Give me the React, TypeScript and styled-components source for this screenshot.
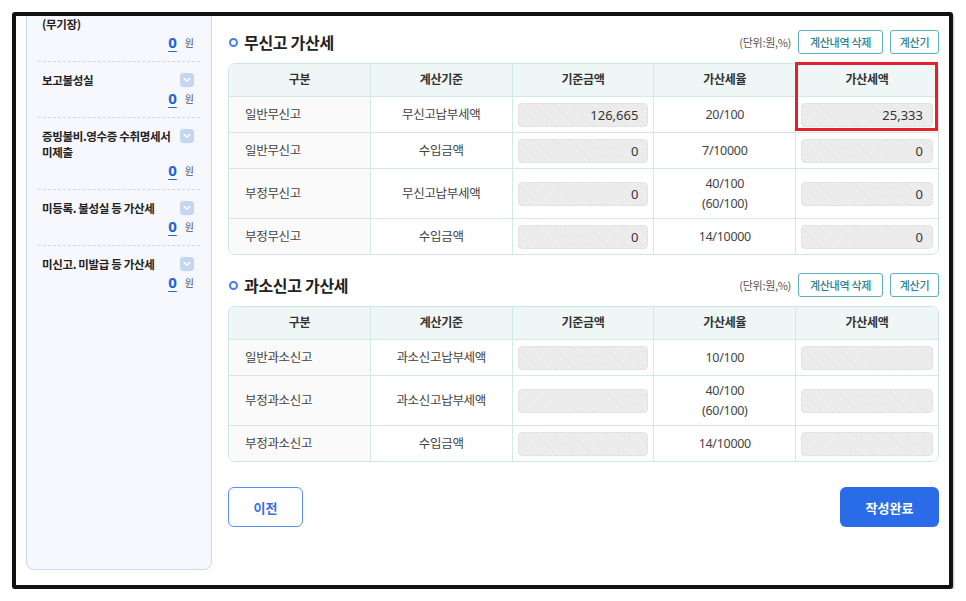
import React from "react";
import styled, { createGlobalStyle } from "styled-components";

const GlobalStyle = createGlobalStyle`
  html, body { margin: 0; padding: 0; background: #ffffff; }
  body {
    font-family: "Noto Sans", "Noto Sans CJK KR", sans-serif;
    color: #333;
    -webkit-font-smoothing: antialiased;
  }
  * { box-sizing: border-box; }
`;

const Frame = styled.div`
  margin: 12px 0 0 12px;
  width: 941px;
  height: 577px;
  border: 4px solid #111;
  border-radius: 3px;
  box-shadow: 1px 2px 2px rgba(0, 0, 0, 0.25);
  background: #fff;
  display: flex;
  padding: 0 10px 15px 10px;
  overflow: hidden;
`;

/* ---------- sidebar ---------- */

const Sidebar = styled.aside`
  width: 186px;
  flex-shrink: 0;
  background: #f6f8fe;
  border: 1px solid #c9daf5;
  border-top: none;
  border-radius: 0 0 8px 8px;
  padding: 0 11px;
`;

const SideItem = styled.div<{ $first?: boolean }>`
  padding: ${(p) => (p.$first ? "0" : "10px")} 6px 9px 4px;
  border-bottom: 1px dashed #cdd8ea;
  &:last-child { border-bottom: none; }
`;

const SideHead = styled.div`
  display: flex;
  align-items: flex-start;
  justify-content: space-between;
  gap: 4px;
`;

const SideTitle = styled.div`
  font-family: "Noto Sans CJK KR", sans-serif;
  font-size: 11.5px;
  font-weight: 700;
  line-height: 16px;
  color: #222;
  letter-spacing: -0.35px;
  white-space: nowrap;
`;

const Toggle = styled.span`
  width: 14px;
  height: 14px;
  margin-top: 1px;
  flex-shrink: 0;
  border-radius: 3px;
  background: #c5d6f2;
  display: flex;
  align-items: center;
  justify-content: center;
`;

const SideValue = styled.div`
  height: 20px;
  display: flex;
  align-items: center;
  justify-content: flex-end;
  gap: 8px;
`;

const Amount = styled.span`
  font-family: "Noto Sans", sans-serif;
  font-size: 15px;
  font-weight: 700;
  color: #2563d9;
  text-decoration: underline;
  text-underline-offset: 3px;
  text-decoration-thickness: 1px;
`;

const Won = styled.span`
  font-family: "Noto Sans CJK KR", sans-serif;
  font-size: 10px;
  color: #4b5671;
`;

const Chevron = () => (
  <svg width="8" height="6" viewBox="0 0 8 6">
    <polyline points="1.2,1.5 4,4.3 6.8,1.5" fill="none" stroke="#ffffff" strokeWidth="1.5" strokeLinecap="round" strokeLinejoin="round" />
  </svg>
);

/* ---------- main ---------- */

const Main = styled.main`
  flex: 1;
  margin-left: 16px;
  padding-top: 14px;
  display: flex;
  flex-direction: column;
`;

const SectionHead = styled.div<{ $gap?: number }>`
  height: 24px;
  margin-top: ${(p) => p.$gap ?? 0}px;
  margin-bottom: 9px;
  display: flex;
  align-items: center;
`;

const Dot = styled.span`
  width: 9px;
  height: 9px;
  border-radius: 50%;
  border: 2.2px solid #4a7de6;
  margin: 0 6px 0 1px;
`;

const SectionTitle = styled.h2`
  margin: 0;
  flex: 1;
  font-family: "Noto Sans CJK KR", sans-serif;
  font-size: 16px;
  font-weight: 700;
  color: #222;
  letter-spacing: -0.3px;
`;

const Unit = styled.span`
  font-family: "Noto Sans CJK KR", sans-serif;
  font-size: 11px;
  color: #555;
  margin-right: 7px;
  letter-spacing: -0.3px;
`;

const OutlineButton = styled.button<{ $w: number }>`
  width: ${(p) => p.$w}px;
  height: 24px;
  margin-left: ${(p) => (p.$w > 60 ? 0 : 7)}px;
  border: 1.5px solid #5eb1b8;
  border-radius: 3px;
  background: #fff;
  color: #2e818a;
  font-family: "Noto Sans CJK KR", sans-serif;
  font-size: 11px;
  font-weight: 500;
  letter-spacing: -0.3px;
  padding: 0;
`;

const TableWrap = styled.div`
  position: relative;
`;

const Grid = styled.div<{ $rows: string }>`
  display: grid;
  grid-template-columns: repeat(5, 1fr);
  grid-template-rows: ${(p) => p.$rows};
  border: 1px solid #cfe5e8;
  border-radius: 7px;
  overflow: hidden;
`;

const Cell = styled.div<{ $head?: boolean; $label?: boolean; $lastCol?: boolean; $lastRow?: boolean }>`
  display: flex;
  align-items: center;
  justify-content: ${(p) => (p.$label ? "flex-start" : "center")};
  padding: ${(p) => (p.$label ? "0 16px" : "0 5px")};
  background: ${(p) => (p.$head ? "#eef7f6" : p.$label ? "#fafafa" : "#fff")};
  border-right: ${(p) => (p.$lastCol ? "none" : "1px solid #d3e8ea")};
  border-bottom: ${(p) => (p.$lastRow ? "none" : "1px solid #d3e8ea")};
  font-family: "Noto Sans", "Noto Sans CJK KR", sans-serif;
  font-size: ${(p) => (p.$head ? "12px" : "12.5px")};
  font-weight: ${(p) => (p.$head ? 700 : 400)};
  color: ${(p) => (p.$head ? "#333" : "#444")};
  letter-spacing: -0.3px;
  text-align: center;
  line-height: 20px;
`;

const ReadBox = styled.div`
  width: 100%;
  height: 24px;
  border: 1px solid #e3e3e3;
  border-radius: 4px;
  background: repeating-linear-gradient(
    45deg,
    #eeeeee 0px,
    #eeeeee 2px,
    #e7e7e7 2px,
    #e7e7e7 3px
  );
  display: flex;
  align-items: center;
  justify-content: flex-end;
  padding-right: 9px;
  font-family: "Noto Sans", sans-serif;
  font-size: 13px;
  color: #333;
  letter-spacing: 0;
`;

const Highlight = styled.div`
  position: absolute;
  top: -1px;
  right: 1px;
  width: 143px;
  height: 69px;
  border: 3px solid #e3202b;
  pointer-events: none;
`;

const Footer = styled.div`
  margin-top: 25px;
  display: flex;
  justify-content: space-between;
`;

const PrevButton = styled.button`
  width: 75px;
  height: 40px;
  border: 1.5px solid #5a8ef0;
  border-radius: 6px;
  background: #fff;
  color: #3a6fe0;
  font-family: "Noto Sans CJK KR", sans-serif;
  font-size: 13px;
  font-weight: 700;
`;

const DoneButton = styled.button`
  width: 99px;
  height: 40px;
  border: none;
  border-radius: 6px;
  background: #2a6ce8;
  color: #fff;
  font-family: "Noto Sans CJK KR", sans-serif;
  font-size: 13px;
  font-weight: 700;
`;

/* ---------- data ---------- */

type Row = { label: string; basis: string; base: string | null; rate: string[]; amount: string | null };

const headers = ["구분", "계산기준", "기준금액", "가산세율", "가산세액"];

const noReport: Row[] = [
  { label: "일반무신고", basis: "무신고납부세액", base: "126,665", rate: ["20/100"], amount: "25,333" },
  { label: "일반무신고", basis: "수입금액", base: "0", rate: ["7/10000"], amount: "0" },
  { label: "부정무신고", basis: "무신고납부세액", base: "0", rate: ["40/100", "(60/100)"], amount: "0" },
  { label: "부정무신고", basis: "수입금액", base: "0", rate: ["14/10000"], amount: "0" },
];

const underReport: Row[] = [
  { label: "일반과소신고", basis: "과소신고납부세액", base: "", rate: ["10/100"], amount: "" },
  { label: "부정과소신고", basis: "과소신고납부세액", base: "", rate: ["40/100", "(60/100)"], amount: "" },
  { label: "부정과소신고", basis: "수입금액", base: "", rate: ["14/10000"], amount: "" },
];

const sideItems = [
  { title: ["(무기장)"], toggle: false },
  { title: ["보고불성실"], toggle: true },
  { title: ["증빙불비.영수증 수취명세서", "미제출"], toggle: true },
  { title: ["미등록. 불성실 등 가산세"], toggle: true },
  { title: ["미신고. 미발급 등 가산세"], toggle: true },
];

const PenaltyTable = ({ rows, rowHeights, marked }: { rows: Row[]; rowHeights: string; marked?: boolean }) => (
  <TableWrap>
    <Grid $rows={rowHeights}>
      {headers.map((h, i) => (
        <Cell key={h} $head $lastCol={i === 4}>
          {h}
        </Cell>
      ))}
      {rows.map((r, ri) => {
        const last = ri === rows.length - 1;
        return (
          <React.Fragment key={ri}>
            <Cell $label $lastRow={last}>{r.label}</Cell>
            <Cell $lastRow={last}>{r.basis}</Cell>
            <Cell $lastRow={last}>
              <ReadBox>{r.base}</ReadBox>
            </Cell>
            <Cell $lastRow={last}>
              <div>
                {r.rate.map((t) => (
                  <div key={t}>{t}</div>
                ))}
              </div>
            </Cell>
            <Cell $lastRow={last} $lastCol>
              <ReadBox>{r.amount}</ReadBox>
            </Cell>
          </React.Fragment>
        );
      })}
    </Grid>
    {marked && <Highlight />}
  </TableWrap>
);

const SectionHeader = ({ title, gap }: { title: string; gap?: number }) => (
  <SectionHead $gap={gap}>
    <Dot />
    <SectionTitle>{title}</SectionTitle>
    <Unit>(단위:원,%)</Unit>
    <OutlineButton $w={85}>계산내역 삭제</OutlineButton>
    <OutlineButton $w={49}>계산기</OutlineButton>
  </SectionHead>
);

export default function App() {
  return (
    <>
      <GlobalStyle />
      <Frame>
        <Sidebar>
          {sideItems.map((it, i) => (
            <SideItem key={i} $first={i === 0}>
              <SideHead>
                <SideTitle>
                  {it.title.map((t) => (
                    <div key={t}>{t}</div>
                  ))}
                </SideTitle>
                {it.toggle && (
                  <Toggle>
                    <Chevron />
                  </Toggle>
                )}
              </SideHead>
              <SideValue>
                <Amount>0</Amount>
                <Won>원</Won>
              </SideValue>
            </SideItem>
          ))}
        </Sidebar>
        <Main>
          <SectionHeader title="무신고 가산세" />
          <PenaltyTable rows={noReport} rowHeights="33px 36px 36px 50px 35px" marked />
          <SectionHeader title="과소신고 가산세" gap={18} />
          <PenaltyTable rows={underReport} rowHeights="33px 36px 50px 35px" />
          <Footer>
            <PrevButton>이전</PrevButton>
            <DoneButton>작성완료</DoneButton>
          </Footer>
        </Main>
      </Frame>
    </>
  );
}
